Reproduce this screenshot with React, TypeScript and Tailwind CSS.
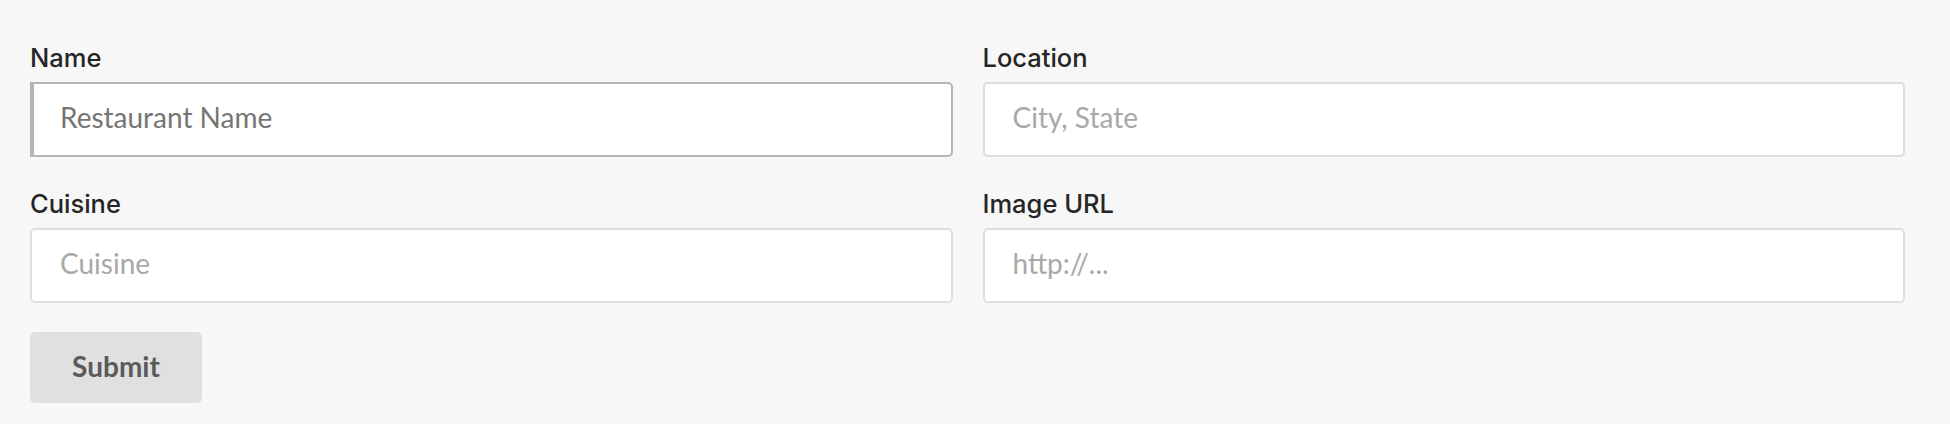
import React from "react";

const labelCls =
  "block font-['Inter',sans-serif] font-medium text-[25.5px] leading-[41px] text-[#262626] mb-[4px]";
const inputBase =
  "w-full h-[75px] bg-white font-['Lato',sans-serif] text-[28px] outline-none rounded-[5px] pb-[5px]";
const inputNormal =
  inputBase +
  " border-2 border-[#dedede] pl-[28px] pr-[28px] text-[#333] placeholder:text-[#a8a8a8]";
const inputFocus =
  inputBase +
  " border-2 border-l-4 border-[#b5b5b5] rounded-l-none pl-[26px] pr-[28px] text-[#333] placeholder:text-[#757575]";

function Field({
  label,
  placeholder,
  focused,
}: {
  label: string;
  placeholder: string;
  focused?: boolean;
}) {
  return (
    <div>
      <label className={labelCls}>{label}</label>
      <input
        type="text"
        placeholder={placeholder}
        className={focused ? inputFocus : inputNormal}
      />
    </div>
  );
}

export default function App() {
  return (
    <div className="min-h-[424px] w-full bg-[#f7f7f7] pl-[30px] pr-[45px] pt-[37px]">
      <form className="grid grid-cols-2 gap-x-[30px] gap-y-[26px]">
        <Field label="Name" placeholder="Restaurant Name" focused />
        <Field label="Location" placeholder="City, State" />
        <Field label="Cuisine" placeholder="Cuisine" />
        <Field label="Image URL" placeholder="http://..." />
      </form>
      <button
        type="button"
        className="mt-[29px] h-[71px] w-[172px] rounded-[5px] bg-[#e0e0e0] pb-[4px] font-['Lato',sans-serif] text-[28px] font-bold text-[#5a5a5a]"
      >
        Submit
      </button>
    </div>
  );
}
